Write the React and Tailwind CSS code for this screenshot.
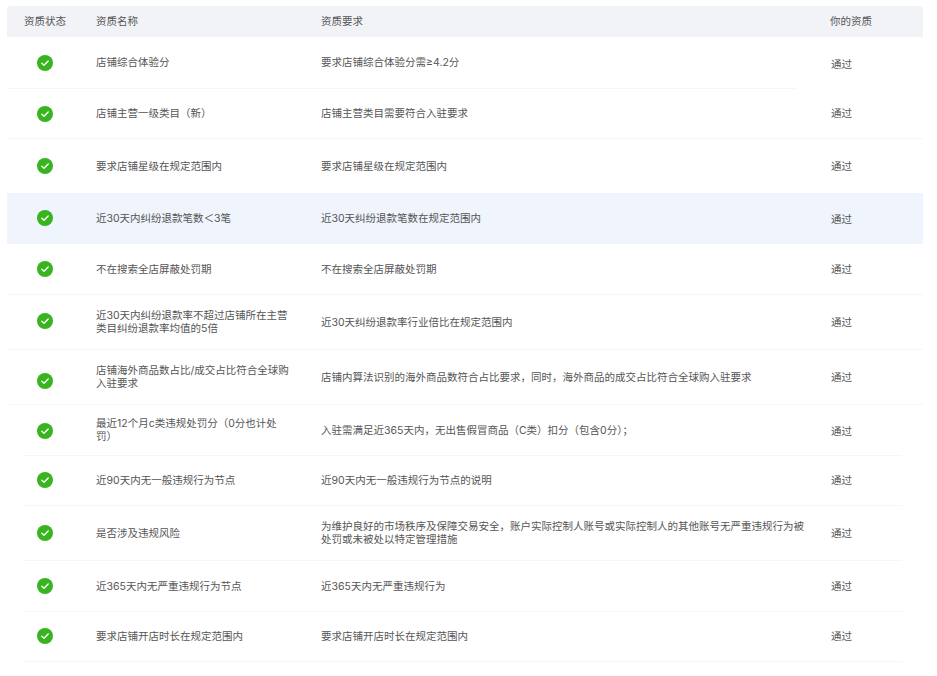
const rows = [
  { name: "店铺综合体验分", req: "要求店铺综合体验分需≥4.2分", h: "h-[51px]", line: "ml-[7px] w-[789px]", passNudge: "mt-[3px]" },
  { name: "店铺主营一级类目（新）", req: "店铺主营类目需要符合入驻要求", h: "h-[49px]", line: "ml-[7px] w-[916px]" },
  { name: "要求店铺星级在规定范围内", req: "要求店铺星级在规定范围内", h: "h-[54px]", line: "" },
  { name: "近30天内纠纷退款笔数＜3笔", req: "近30天纠纷退款笔数在规定范围内", h: "h-[51px]", line: "", active: true, icon: "-mt-[2px]", passNudge: "mt-[1px]" },
  { name: "不在搜索全店屏蔽处罚期", req: "不在搜索全店屏蔽处罚期", h: "h-[50px]", line: "ml-[7px] w-[916px]" },
  { name: "近30天内纠纷退款率不超过店铺所在主营类目纠纷退款率均值的5倍", req: "近30天纠纷退款率行业倍比在规定范围内", h: "h-[54px]", line: "ml-[7px] w-[916px]", icon: "-mt-[2px]" },
  { name: "店铺海外商品数占比/成交占比符合全球购入驻要求", req: "店铺内算法识别的海外商品数符合占比要求，同时，海外商品的成交占比符合全球购入驻要求", h: "h-[54px]", line: "ml-[7px] w-[916px]", icon: "mt-[8px]" },
  { name: "最近12个月c类违规处罚分（0分也计处罚）", req: "入驻需满足近365天内，无出售假冒商品（C类）扣分（包含0分）；", h: "h-[50px]", line: "ml-[23px] w-[879px]", icon: "mt-[2px]", passNudge: "mt-[2px]" },
  { name: "近90天内无一般违规行为节点", req: "近90天内无一般违规行为节点的说明", h: "h-[49px]", line: "ml-[23px] w-[879px]", icon: "-mt-[2px]" },
  { name: "是否涉及违规风险", req: "为维护良好的市场秩序及保障交易安全，账户实际控制人账号或实际控制人的其他账号无严重违规行为被处罚或未被处以特定管理措施", h: "h-[54px]", line: "ml-[23px] w-[879px]" },
  { name: "近365天内无严重违规行为节点", req: "近365天内无严重违规行为", h: "h-[50px]", line: "ml-[23px] w-[879px]" },
  { name: "要求店铺开店时长在规定范围内", req: "要求店铺开店时长在规定范围内", h: "h-[49px]", line: "ml-[23px] w-[879px]", icon: "-mt-[2px]" },
];

function PassIcon({ className }) {
  return (
    <svg viewBox="0 0 16 16" className={className}>
      <circle cx="8" cy="8" r="8" fill="#38b41f" />
      <path d="M4.8 8.2l2.2 2.1 4.2-4.3" fill="none" stroke="#fff" strokeWidth="1.4" strokeLinecap="round" strokeLinejoin="round" />
    </svg>
  );
}

export default function App() {
  return (
    <div className="min-h-screen w-[937px] bg-white pt-[6px] text-[10.5px] leading-[13px] text-[#555] font-['Inter','Noto_Sans_CJK_SC',sans-serif]">
      <div className="ml-[7px] grid h-[31px] w-[916px] grid-cols-[89px_225px_509px_93px] items-center rounded-t-[3px] bg-[#f2f3f7]">
        <div className="pl-[17px]">资质状态</div>
        <div>资质名称</div>
        <div>资质要求</div>
        <div>你的资质</div>
      </div>
      {rows.map((row) => (
        <div key={row.name}>
          <div className={`ml-[7px] grid w-[916px] grid-cols-[89px_225px_509px_93px] items-center ${row.h} ${row.active ? "bg-[#eff4fd]" : ""}`}>
            <div className="flex justify-center pr-[13px]">
              <PassIcon className={`size-4 ${row.icon || ""}`} />
            </div>
            <div className="pr-[30px]">{row.name}</div>
            <div className="pr-[21px]">{row.req}</div>
            <div className={`pl-px ${row.passNudge || ""}`}>通过</div>
          </div>
          {row.line ? <div className={`h-px bg-[#f6f6f8] ${row.line}`} /> : null}
        </div>
      ))}
    </div>
  );
}
